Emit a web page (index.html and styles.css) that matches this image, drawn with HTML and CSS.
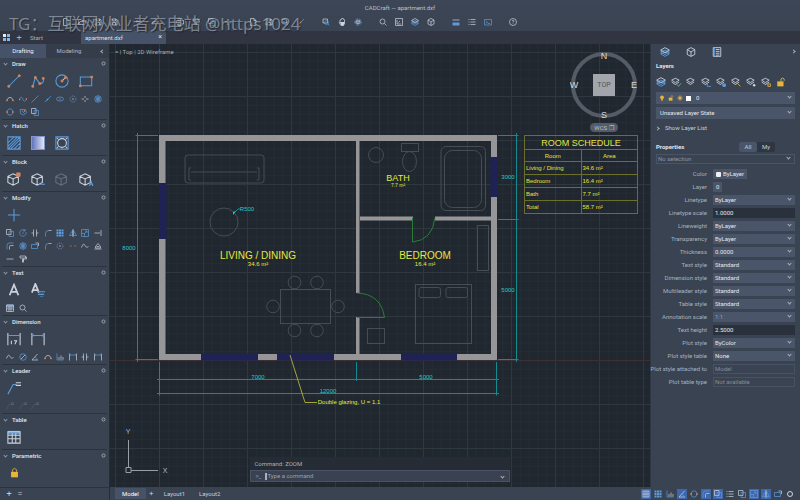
FILE: index.html
```html
<!DOCTYPE html>
<html lang="en">
<head>
<meta charset="utf-8">
<title>CADCraft — apartment.dxf</title>
<link rel="stylesheet" href="styles.css">
</head>
<body>
<svg class="defs" aria-hidden="true">
  <symbol id="line" viewBox="0 0 16 16"><path d="M2 14 14 2"/><path class="o" d="M1 13h2v2H1zM13 1h2v2h-2z"/></symbol>
  <symbol id="poly" viewBox="0 0 16 16"><path d="M2 14 5 4l5 7c3 0 5-2 4-6"/><path class="o" d="M1 13h2v2H1zM4 3h2v2H4zM9 10h2v2H9zM13 4h2v2h-2z"/></symbol>
  <symbol id="circle" viewBox="0 0 16 16"><circle cx="8" cy="8" r="7"/><path class="w" d="m8 8 4-4"/><path class="o" d="M7 7h2v2H7zM11 3h2v2h-2z"/></symbol>
  <symbol id="rect" viewBox="0 0 16 16"><path d="M1.500 3.500h13v10h-13z"/><path class="o" d="M.5 12.500h2v2h-2zM13.500 2.500h2v2h-2z"/></symbol>
  <symbol id="arc" viewBox="0 0 16 16"><path class="w" d="M2 11c1-8 11-8 12 0"/><path class="o" d="M1 10h2v2H1zM13 10h2v2h-2z"/></symbol>
  <symbol id="spline" viewBox="0 0 16 16"><path d="M1 9c3-7 5-5 7 0s4 5 7-1"/><path class="o" d="M0 8h2v2H0zM14 7h2v2h-2z"/></symbol>
  <symbol id="xline" viewBox="0 0 16 16"><path d="M1 15 15 1"/></symbol>
  <symbol id="ray" viewBox="0 0 16 16"><path d="M2 14 14 2"/><path class="o" d="M6 8h2v2H6z"/></symbol>
  <symbol id="ellipse" viewBox="0 0 16 16"><ellipse cx="8" cy="8" rx="7" ry="4"/><path class="w" d="M7 8h2"/></symbol>
  <symbol id="dots" viewBox="0 0 16 16"><circle cx="8" cy="8" r="6" stroke-dasharray="3 2"/><path class="o" d="M7 7h2v2H7z"/></symbol>
  <symbol id="point" viewBox="0 0 16 16"><path class="w" d="M8 2v4M8 10v4M1 8h5M10 8h5"/></symbol>
  <symbol id="donut" viewBox="0 0 16 16"><circle cx="8" cy="8" r="6.500"/><circle cx="8" cy="8" r="3"/><path d="m3 4 10 8M3 12 13 4M8 1v14"/></symbol>
  <symbol id="cloud" viewBox="0 0 16 16"><path d="M4 3q4-3 8 0 4 5 0 10-4 3-8 0-4-5 0-10z"/><path class="o" d="M1 7h2v2H1zM13 7h2v2h-2z"/></symbol>
  <symbol id="wipe" viewBox="0 0 16 16"><path d="M2 3h11l2 6-6 5-6-3zM5 5l6 6"/><path class="o" d="M10 5h2v2h-2z"/></symbol>
  <symbol id="copy" viewBox="0 0 16 16"><path class="w" d="M1 1h9v10H1z"/><path d="M6 5h9v10H6z"/></symbol>
  <symbol id="hatch" viewBox="0 0 16 16"><path d="M1 1h14v14H1zM1 8 8 1M1 12 12 1M1 15 15 1M4 15 15 4M8 15l7-7M12 15l3-3"/></symbol>
  <symbol id="bound" viewBox="0 0 16 16"><path d="M1 1h14v14H1z"/><circle class="w" cx="8" cy="8" r="5"/><path class="w" d="m2 2 2 2m8 8 2 2M2 14l2-2m8-8 2-2"/></symbol>
  <symbol id="cube" viewBox="0 0 16 16"><path class="w" d="m7 2 6 3v7l-6 3-6-3V5zM1 5l6 3 6-3M7 8v7"/></symbol>
  <symbol id="cross" viewBox="0 0 16 16"><path d="M8 1v14M1 8h14"/></symbol>
  <symbol id="rotate" viewBox="0 0 16 16"><path d="M12 3a6.500 6.500 0 1 0 2 3M12 0v4H8"/><path class="w" d="M7 8h2"/></symbol>
  <symbol id="trim" viewBox="0 0 16 16"><path class="w" d="M5 1v14M11 1v14M1 8h4M11 8h4"/></symbol>
  <symbol id="fillet" viewBox="0 0 16 16"><path d="M3 15V9q0-6 6-6"/><path class="w" d="M9 3h6"/></symbol>
  <symbol id="array" viewBox="0 0 16 16"><path class="f" d="M1 1h4v4H1zM6 1h4v4H6zM11 1h4v4h-4zM1 6h4v4H1zM6 6h4v4H6zM11 6h4v4h-4zM1 11h4v4H1zM6 11h4v4H6zM11 11h4v4h-4z"/></symbol>
  <symbol id="mirror" viewBox="0 0 16 16"><path d="M7 3v10H1zM9 3v10h6z"/><path class="w" d="M8 0v16"/></symbol>
  <symbol id="scale" viewBox="0 0 16 16"><path d="M1 1h14v14H1zM1 9h6v6M7 9l5-5M8 4h4v4"/></symbol>
  <symbol id="extend" viewBox="0 0 16 16"><path class="w" d="M1 8h11M14 2v12"/></symbol>
  <symbol id="offset" viewBox="0 0 16 16"><path d="M2 15V7q0-5 5-5h8"/><path class="w" d="M7 15V9q0-2 2-2h6"/></symbol>
  <symbol id="stretch" viewBox="0 0 16 16"><path d="M1 5h12v8H1z"/><path class="w" d="M9 2h6v6"/></symbol>
  <symbol id="dash" viewBox="0 0 16 16"><path class="o" d="M1 8h5M10 8h5"/></symbol>
  <symbol id="wave" viewBox="0 0 16 16"><path class="w" d="M1 11c3-8 5-8 7-4s4 4 7 2"/></symbol>
  <symbol id="erase" viewBox="0 0 16 16"><path class="w" d="m3 9 5-6 5 6v3H3zM1 14h14M5 9h6"/></symbol>
  <symbol id="minus" viewBox="0 0 16 16"><path class="w" d="M1 8h14"/></symbol>
  <symbol id="brush" viewBox="0 0 16 16"><path class="w" d="M2 2h11v4H2zM13 4h2v4H8v7M7 8h2v6H7z"/></symbol>
  <symbol id="lettera" viewBox="0 0 16 16"><path class="w big" d="m3 14 5-12 5 12M5 10h6"/></symbol>
  <symbol id="mtext" viewBox="0 0 16 16"><path class="w big" d="m1 11 4-10 4 10M2 8h6"/><path d="M7 10h9M8 13h7M10 16h4"/></symbol>
  <symbol id="table" viewBox="0 0 16 16"><path class="f" d="M1 1h14v4H1z"/><path class="w" d="M1 2h14v13H1zM1 6h14M1 10h14M6 4v11M10 4v11"/></symbol>
  <symbol id="find" viewBox="0 0 16 16"><circle class="w" cx="7" cy="7" r="5"/><path class="w" d="m11 11 4 4"/></symbol>
  <symbol id="dim" viewBox="0 0 16 16"><path class="w" d="M1 1v14M15 1v14"/><path d="M1 4h14M3 3 1 4l2 1M13 3l2 1-2 1"/></symbol>
  <symbol id="dimv" viewBox="0 0 16 16"><path class="w" d="M1 1v14M15 1v14M5 10v4M8 10h3l-2 4"/><path d="M1 4h14"/></symbol>
  <symbol id="angle" viewBox="0 0 16 16"><path class="w" d="M13 2 2 14h12"/><path d="M8 8q4 2 4 6"/></symbol>
  <symbol id="diam" viewBox="0 0 16 16"><circle cx="8" cy="8" r="6.500"/><path class="w" d="M4 12 12 4"/></symbol>
  <symbol id="ord" viewBox="0 0 16 16"><path d="M2 1v13h13"/><path class="w" d="M6 13V8M10 13V5M14 13V8"/></symbol>
  <symbol id="leader" viewBox="0 0 16 16"><path d="M1 15 7 4h4"/><path class="w" d="M10 2h6M10 5h6"/></symbol>
  <symbol id="lock" viewBox="0 0 16 16"><path class="ys" d="M5 7V4q3-4 6 0v3"/><path class="yf" d="M3 7h10v8H3z"/></symbol>
  <symbol id="unlock" viewBox="0 0 16 16"><path class="ys" d="M8 7V3q3-3 5 0v3"/><path class="yf" d="M2 7h10v8H2z"/></symbol>
  <symbol id="file" viewBox="0 0 16 16"><path class="w" d="M3 1h7l4 4v10H3zM10 1v4h4"/></symbol>
  <symbol id="folder" viewBox="0 0 16 16"><path class="w" d="M1 13V3h5l2 2h6v3M1 13l3-6h12l-3 6z"/></symbol>
  <symbol id="save" viewBox="0 0 16 16"><path class="w" d="M2 2h10l2 2v10H2zM5 2v4h6V2M5 14V9h6v5"/></symbol>
  <symbol id="undo" viewBox="0 0 16 16"><path class="w" d="M3 7h7q4 0 4 5M6 3 2 7l4 4"/></symbol>
  <symbol id="redo" viewBox="0 0 16 16"><path class="w" d="M13 7H6q-4 0-4 5M10 3l4 4-4 4"/></symbol>
  <symbol id="print" viewBox="0 0 16 16"><path class="w" d="M4 5V1h8v4M1 5h14v7H1zM4 10h8v5H4z"/></symbol>
  <symbol id="zoomw" viewBox="0 0 16 16"><path class="w" d="M2 2h9v8H2z"/><circle cx="9" cy="9" r="4"/><path d="m12 12 3 3"/></symbol>
  <symbol id="hand" viewBox="0 0 16 16"><path class="w" d="M4 8V4h2V2h2V1h2v1h2v2h1v7l-2 4H6L2 9z"/><path class="wf" d="M4 8h9v3l-2 4H6z"/></symbol>
  <symbol id="orbit" viewBox="0 0 16 16"><circle cx="8" cy="8" r="6.500" stroke-dasharray="6 2"/><path class="w" d="m8 4 4 2v4l-4 2-4-2V6zM4 6l4 2 4-2M8 8v4"/></symbol>
  <symbol id="frame" viewBox="0 0 16 16"><path class="w" d="M1 1h14v14H1zM4 4v8h8M7 9l3-3"/></symbol>
  <symbol id="layers" viewBox="0 0 16 16"><path d="m8 8 7 3-7 4-7-4z"/><path d="m8 5 7 3-7 4-7-4z"/><path class="w" d="m8 1 7 4-7 4-7-4z"/></symbol>
  <symbol id="layer" viewBox="0 0 16 16"><path class="w" d="m7 2 6 3-6 4-6-4zM1 8l6 4 6-4"/></symbol>
  <symbol id="box" viewBox="0 0 16 16"><path class="w" d="m8 1 6 3v8l-6 3-6-3V4zM2 4l6 4 6-4M8 8v7"/></symbol>
  <symbol id="panel" viewBox="0 0 16 16"><path class="w" d="M1 4h14"/><path class="f" d="M1 9h14v6H1z"/></symbol>
  <symbol id="list" viewBox="0 0 16 16"><path class="w" d="M1 3h2M5 3h10M1 8h2M5 8h10M1 13h2M5 13h10"/></symbol>
  <symbol id="prompt" viewBox="0 0 16 16"><path d="M1 3h14v11H1zM4 6l3 3-3 2M8 11h4"/></symbol>
  <symbol id="help" viewBox="0 0 16 16"><circle class="w" cx="8" cy="8" r="7"/><path class="w" d="M6 6q2-3 4 0 0 1-2 3M8 11v1"/></symbol>
  <symbol id="book" viewBox="0 0 16 16"><path class="w" d="M2 1h12v14H2zM6 4h6M6 7h6M6 10h6M6 13h6"/><path d="M4 1v14"/></symbol>
  <symbol id="grid" viewBox="0 0 16 16"><path class="w" d="M2 2h12v12H2zM6 2v12M10 2v12M2 8h12"/></symbol>
  <symbol id="gear" viewBox="0 0 16 16"><circle class="w big" cx="8" cy="8" r="5"/></symbol>
</svg>

<header class="titlebar">
  <h1>CADCraft — apartment.dxf</h1>
  <div class="toolbar" role="toolbar" aria-label="Main">
    <div class="group">
      <button aria-label="New"><svg><use href="#file"/></svg></button><button aria-label="Open"><svg><use href="#folder"/></svg></button><button aria-label="Save"><svg><use href="#save"/></svg></button><button aria-label="Save as"><svg><use href="#save"/></svg></button>
    </div>
    <div class="group">
      <button aria-label="Undo"><svg><use href="#undo"/></svg></button><button aria-label="Redo"><svg><use href="#redo"/></svg></button>
    </div>
    <div class="group">
      <button aria-label="Print"><svg><use href="#print"/></svg></button><button aria-label="Match"><svg><use href="#brush"/></svg></button><button aria-label="Copy"><svg><use href="#copy"/></svg></button><button aria-label="Measure"><svg><use href="#point"/></svg></button>
    </div>
    <div class="group">
      <button aria-label="Paste"><svg><use href="#file"/></svg></button><button aria-label="Block"><svg><use href="#save"/></svg></button><button aria-label="Reference"><svg><use href="#zoomw"/></svg></button><button aria-label="Attach"><svg><use href="#ray"/></svg></button>
    </div>
    <div class="group">
      <button aria-label="Zoom window"><svg><use href="#zoomw"/></svg></button><button aria-label="Pan"><svg><use href="#hand"/></svg></button><button aria-label="Orbit"><svg><use href="#orbit"/></svg></button>
    </div>
    <div class="group">
      <button aria-label="Zoom"><svg><use href="#find"/></svg></button><button aria-label="Extents"><svg><use href="#frame"/></svg></button><button aria-label="Layers"><svg><use href="#layers"/></svg></button><button aria-label="3D"><svg><use href="#box"/></svg></button>
    </div>
    <div class="group">
      <button aria-label="Panels"><svg><use href="#panel"/></svg></button><button aria-label="Properties"><svg><use href="#list"/></svg></button><button aria-label="Console"><svg><use href="#prompt"/></svg></button>
    </div>
    <div class="group"><button aria-label="Help"><svg><use href="#help"/></svg></button></div>
  </div>
  <div class="watermark" lang="zh">TG：互联网从业者充电站 @https1024</div>
</header>

<nav class="filetabs" aria-label="Files">
  <button class="home" aria-label="Home"><i></i><i></i><i></i><i></i></button>
  <button class="plus" aria-label="New tab">+</button>
  <a class="start" href="#start">Start</a>
  <a class="file" href="#apartment">apartment.dxf<span>×</span></a>
</nav>

<div class="workspace">
  <aside class="tools">
    <nav class="tooltabs"><button class="on">Drafting</button><button>Modeling</button><button class="fold" aria-label="Collapse"><b class="chev left"></b></button></nav>
    <div class="sections">
      <section><h2><b class="chev"></b>Draw<svg><use href="#gear"/></svg></h2>
        <div class="bigs"><svg><use href="#line"/></svg><svg><use href="#poly"/></svg><svg><use href="#circle"/></svg><svg><use href="#rect"/></svg></div>
        <div class="smalls"><svg><use href="#arc"/></svg><svg><use href="#spline"/></svg><svg><use href="#xline"/></svg><svg><use href="#ray"/></svg><svg><use href="#ellipse"/></svg><svg><use href="#dots"/></svg><svg><use href="#point"/></svg><svg><use href="#donut"/></svg><svg><use href="#cloud"/></svg><svg><use href="#wipe"/></svg><svg><use href="#copy"/></svg></div>
      </section>
      <section><h2><b class="chev"></b>Hatch<svg><use href="#gear"/></svg></h2>
        <div class="bigs"><svg><use href="#hatch"/></svg><span class="gradient"></span><svg><use href="#bound"/></svg></div>
      </section>
      <section><h2><b class="chev"></b>Block<svg><use href="#gear"/></svg></h2>
        <div class="bigs"><svg viewBox="0 0 16 16"><use href="#cube"/><path class="o" d="M11 1h4v4h-4z"/></svg><svg viewBox="0 0 16 16"><use href="#cube"/><path d="M9 14h7"/></svg><svg class="off"><use href="#cube"/></svg><svg viewBox="0 0 16 16"><use href="#cube"/><path d="m12 16 2-5 2 5M13 14h2"/></svg></div>
      </section>
      <section><h2><b class="chev"></b>Modify<svg><use href="#gear"/></svg></h2>
        <div class="bigs"><svg><use href="#cross"/></svg></div>
        <div class="smalls"><svg><use href="#copy"/></svg><svg><use href="#rotate"/></svg><svg><use href="#trim"/></svg><svg><use href="#fillet"/></svg><svg><use href="#array"/></svg><svg><use href="#mirror"/></svg><svg><use href="#scale"/></svg><svg><use href="#extend"/></svg><svg><use href="#offset"/></svg><svg><use href="#donut"/></svg><svg><use href="#stretch"/></svg><svg><use href="#fillet"/></svg><svg><use href="#dots"/></svg><svg><use href="#dash"/></svg><svg><use href="#wave"/></svg><svg><use href="#erase"/></svg><svg><use href="#minus"/></svg><svg><use href="#brush"/></svg></div>
      </section>
      <section><h2><b class="chev"></b>Text<svg><use href="#gear"/></svg></h2>
        <div class="bigs"><svg><use href="#lettera"/></svg><svg><use href="#mtext"/></svg></div>
        <div class="smalls"><svg><use href="#table"/></svg><svg><use href="#find"/></svg></div>
      </section>
      <section><h2><b class="chev"></b>Dimension<svg><use href="#gear"/></svg></h2>
        <div class="bigs"><svg><use href="#dimv"/></svg><svg><use href="#dim"/></svg></div>
        <div class="smalls"><svg><use href="#wave"/></svg><svg><use href="#diam"/></svg><svg><use href="#angle"/></svg><svg><use href="#arc"/></svg><svg><use href="#ord"/></svg><svg><use href="#dim"/></svg><svg><use href="#trim"/></svg><svg><use href="#dim"/></svg></div>
      </section>
      <section><h2><b class="chev"></b>Leader<svg><use href="#gear"/></svg></h2>
        <div class="bigs"><svg><use href="#leader"/></svg></div>
        <div class="smalls off"><svg><use href="#leader"/></svg><svg><use href="#leader"/></svg><svg><use href="#leader"/></svg></div>
      </section>
      <section><h2><b class="chev"></b>Table<svg><use href="#gear"/></svg></h2>
        <div class="bigs"><svg><use href="#table"/></svg></div>
      </section>
      <section><h2><b class="chev"></b>Parametric<svg><use href="#gear"/></svg></h2>
        <div class="bigs lockrow"><svg><use href="#lock"/></svg></div>
        <div class="smalls"><svg><use href="#minus"/></svg><svg><use href="#xline"/></svg><svg><use href="#angle"/></svg><svg><use href="#minus"/></svg><svg><use href="#cross"/></svg><svg><use href="#extend"/></svg><svg><use href="#arc"/></svg></div>
      </section>
    </div>
    <footer class="toolfoot"><button aria-label="Add">+</button><button aria-label="Menu">=</button></footer>
  </aside>

  <main class="center">
    <div class="canvas">
      <svg class="drawing" viewBox="110 44 540 443" preserveAspectRatio="xMidYMid slice">
        <defs>
          <pattern id="minor" x="159" y="360" width="8.800" height="8.800" patternUnits="userSpaceOnUse"><path d="M0 .5h8.800M.5 0v8.800" stroke="#242d35"/></pattern>
          <pattern id="major" x="159" y="360" width="44" height="44" patternUnits="userSpaceOnUse"><path d="M0 .5h44M.5 0v44" stroke="#2d383f"/></pattern>
        </defs>
        <rect class="paper" x="110" y="44" width="540" height="443" fill="url(#minor)"/>
        <rect class="paper" x="110" y="44" width="540" height="443" fill="url(#major)"/>
        <path d="M110 360.500h540" stroke="#3d3034"/><path d="M159.500 44v443" stroke="#2a4238"/>
        <g class="furniture">
          <rect x="185" y="155" width="79" height="28" rx="3"/><path d="M191 168h-2v12h2M257 168h2v12h-2M191 172h66"/>
          <circle cx="224" cy="222" r="14"/>
          <rect x="280.500" y="289.500" width="50" height="34"/>
          <circle cx="294.500" cy="282.500" r="6.300"/><circle cx="317" cy="282.500" r="6.300"/><circle cx="273" cy="306.500" r="6.300"/><circle cx="338" cy="306.500" r="6.300"/><circle cx="294.500" cy="330.500" r="6.300"/><circle cx="317" cy="330.500" r="6.300"/>
          <circle cx="376" cy="155" r="7.500"/><rect x="401.500" y="143.500" width="17" height="8"/><ellipse cx="409.500" cy="161.500" rx="7" ry="10"/>
          <rect x="441" y="146.500" width="44.500" height="64" rx="5"/><rect x="444.500" y="150.500" width="37" height="57" rx="8"/>
          <rect x="477.500" y="225.500" width="11" height="45"/>
          <rect x="415.500" y="284.500" width="56" height="59"/><rect x="419" y="287.500" width="21.500" height="10" rx="2"/><rect x="446" y="287.500" width="21.500" height="10" rx="2"/>
          <rect x="367.500" y="328.500" width="17" height="15"/>
        </g>
        <path class="wall" d="M159 135h338v225H159zM165.500 141v213h325.500V141z"/>
        <path class="wall" d="M356 141h3.500v152H356zM356 317h3.500v37H356zM359 216.500h54v4h-54zM435 216.500h56v4h-56z"/>
        <path class="window" d="M159 183h7.500v56H159zM490.500 157h7v40h-7zM201 353.500h57v7h-57zM277 353.500h57v7h-57zM401 353.500h56v7h-56z"/>
        <path class="door" d="M412.500 218v24q20-2 22.500-24M357 293q24 1 27.500 24.500H357"/>
        <g class="dimension">
          <path d="M137.500 133v229M135.500 135.500H158M135.500 359.500H158M516.500 133v229M498 135.500h20.500M498 219.500h20.500M498 359.500h20.500M157 379.500h342M157 393.500h342M159.500 362v33.500M356.500 362v19M496.500 362v33.500M233 214l5-5h2"/>
          <path class="fill" d="m233 215 3-4-3 1z"/>
          <text x="129" y="250">8000</text><text x="508" y="179">3000</text><text x="508" y="292">5000</text><text x="258" y="379">7000</text><text x="426" y="379">5000</text><text x="328" y="393">12000</text><text x="247" y="211">R500</text>
        </g>
        <path class="note" d="m290 355 15 47.500h12"/>
        <g class="labels">
          <text class="room" x="258" y="259">LIVING / DINING</text><text x="258" y="266">34.6 m²</text>
          <text class="room" x="425" y="259">BEDROOM</text><text x="425" y="266">16.4 m²</text>
          <text class="bath" x="398" y="181">BATH</text><text class="tiny" x="398" y="187">7.7 m²</text>
          <text x="349" y="404">Double glazing, U = 1.1</text>
        </g>
        <g class="ucs"><path d="M128.500 467V440M131 470.500h27M126 467.500h5v5h-5z"/><text x="128" y="434">Y</text><text x="165" y="473">X</text></g>
      </svg>
      <div class="viewlabel">= | Top | 2D Wireframe</div>
      <div class="compass">
        <svg viewBox="0 0 68 68"><circle cx="34" cy="34" r="31"/><text x="34" y="8">N</text><text x="34" y="67">S</text><text x="4" y="37">W</text><text x="64" y="37">E</text></svg>
        <button class="top">TOP</button>
        <button class="wcs">WCS ❐</button>
      </div>
      <table class="schedule">
        <thead><tr class="caption"><th colspan="2">ROOM SCHEDULE</th></tr><tr><th>Room</th><th>Area</th></tr></thead>
        <tbody><tr><td>Living / Dining</td><td>34.6 m²</td></tr><tr><td>Bedroom</td><td>16.4 m²</td></tr><tr><td>Bath</td><td>7.7 m²</td></tr><tr><td>Total</td><td>58.7 m²</td></tr></tbody>
      </table>
      <div class="command">
        <output>Command: ZOOM</output>
        <label><span>&gt;_</span><i class="caret"></i><input type="text" placeholder="Type a command" aria-label="Command"><b class="chev"></b></label>
      </div>
    </div>
  </main>

  <aside class="props">
    <nav class="proptabs"><button aria-label="Layers"><svg><use href="#layers"/></svg></button><button aria-label="Blocks"><svg><use href="#box"/></svg></button><button aria-label="Sheets"><svg><use href="#book"/></svg></button><b class="chev right"></b></nav>
    <h2>Layers</h2>
    <div class="layertools"><svg><use href="#layers"/></svg><svg viewBox="0 0 16 16"><use href="#layer"/><path class="g" d="m10 12 2 3 4-5"/></svg><svg><use href="#layer"/></svg><svg viewBox="0 0 16 16"><use href="#layer"/><path d="M10 11v4h6"/></svg><svg viewBox="0 0 16 16"><use href="#layer"/><circle class="f" cx="13" cy="13" r="3"/></svg><svg viewBox="0 0 16 16"><use href="#layer"/><path class="ys" d="m10 10 5 5"/></svg><svg viewBox="0 0 16 16"><use href="#layer"/><circle class="wf" cx="13" cy="13" r="2"/></svg><svg viewBox="0 0 16 16"><use href="#layer"/><path class="ys" d="M11 11h4v4h-4z"/></svg><svg><use href="#unlock"/></svg></div>
    <div class="select layer"><svg viewBox="0 0 16 16"><circle class="yf" cx="8" cy="6" r="5"/><path class="yf" d="M6 10h4v5H6z"/></svg><svg><use href="#unlock"/></svg><svg viewBox="0 0 16 16"><circle class="yf" cx="8" cy="8" r="4"/><path class="ys" d="M8 0v16M0 8h16M3 3l10 10M3 13 13 3"/></svg><i class="swatch"></i><select aria-label="Current layer"><option>0</option></select><b class="chev"></b></div>
    <div class="select state"><select aria-label="Layer state"><option>Unsaved Layer State</option></select><b class="chev"></b></div>
    <button class="show"><b class="chev right"></b>Show Layer List</button>
    <div class="prophead"><h2>Properties</h2><div class="toggle"><button class="on">All</button><button>My</button></div></div>
    <div class="select nosel"><select aria-label="Selection"><option>No selection</option></select><b class="chev"></b></div>
    <div class="form">
      <label for="color">Color</label><button class="chip" id="color"><i class="dot"></i>ByLayer</button>
      <label for="layer0">Layer</label><button class="chip" id="layer0">0</button>
      <label for="lt">Linetype</label><div class="select"><select id="lt"><option>ByLayer</option></select><b class="chev"></b></div>
      <label for="ls">Linetype scale</label><input id="ls" value="1.0000">
      <label for="lw">Lineweight</label><div class="select"><select id="lw"><option>ByLayer</option></select><b class="chev"></b></div>
      <label for="tr">Transparency</label><div class="select"><select id="tr"><option>ByLayer</option></select><b class="chev"></b></div>
      <label for="th">Thickness</label><div class="select"><select id="th"><option>0.0000</option></select><b class="chev"></b></div>
      <label for="ts">Text style</label><div class="select"><select id="ts"><option>Standard</option></select><b class="chev"></b></div>
      <label for="ds">Dimension style</label><div class="select"><select id="ds"><option>Standard</option></select><b class="chev"></b></div>
      <label for="ms">Multileader style</label><div class="select"><select id="ms"><option>Standard</option></select><b class="chev"></b></div>
      <label for="tb">Table style</label><div class="select"><select id="tb"><option>Standard</option></select><b class="chev"></b></div>
      <label for="an">Annotation scale</label><div class="select dim"><select id="an"><option>1:1</option></select><b class="chev"></b></div>
      <label for="hh">Text height</label><input id="hh" value="2.5000">
      <label for="ps">Plot style</label><div class="select"><select id="ps"><option>ByColor</option></select><b class="chev"></b></div>
      <label for="pt">Plot style table</label><div class="select"><select id="pt"><option>None</option></select><b class="chev"></b></div>
      <label for="pa">Plot style attached to</label><input id="pa" value="Model" disabled>
      <label for="py">Plot table type</label><input id="py" value="Not available" disabled>
    </div>
  </aside>

  <footer class="status">
    <nav><a class="on" href="#model">Model</a><button aria-label="New layout">+</button><a href="#layout1">Layout1</a><a href="#layout2">Layout2</a></nav>
    <div class="modes">
      <button class="on" aria-label="Grid"><svg><use href="#grid"/></svg></button><button aria-label="Snap"><svg><use href="#array"/></svg></button><button aria-label="Ortho"><svg><use href="#ord"/></svg></button><button class="on" aria-label="Polar"><svg><use href="#angle"/></svg></button><button aria-label="Isoplane"><svg><use href="#cloud"/></svg></button><button class="on" aria-label="Tracking"><svg><use href="#offset"/></svg></button><button class="on" aria-label="Object snap"><svg><use href="#copy"/></svg></button><button aria-label="Lineweight"><svg><use href="#list"/></svg></button><button aria-label="Cycling"><svg><use href="#copy"/></svg></button><button class="on" aria-label="UCS"><svg><use href="#scale"/></svg></button><button class="on" aria-label="Annotation"><svg><use href="#mirror"/></svg></button><button aria-label="Isolate"><svg><use href="#stretch"/></svg></button><button aria-label="Settings"><svg><use href="#gear"/></svg></button>
    </div>
  </footer>
</div>
</body>
</html>
```
FILE: styles.css
```css
* { box-sizing: border-box; margin: 0; padding: 0; }
body {
  display: flex; flex-direction: column; height: 100vh; overflow: hidden;
  background: #3b4453; color: #c9ced7;
  font: 6px/10px Roboto, "Liberation Sans", sans-serif;
}
button, input, select { font: inherit; color: inherit; background: none; border: 0; border-radius: 0; appearance: none; outline: 0; min-width: 0; }
a { color: inherit; text-decoration: none; }
svg { display: block; fill: none; stroke: #5b9bdc; stroke-width: 1.4; }
.defs { position: absolute; width: 0; height: 0; }
.w { stroke: #cdd3dc; }
.big { stroke-width: 2; }
.o { stroke: #d08560; fill: #d08560; stroke-width: 1; }
.g { stroke: #62b88a; }
.f { fill: #5b9bdc; stroke: none; }
.wf { fill: #cdd3dc; stroke: none; }
.ys { stroke: #e0b048; }
.yf { fill: #e8b53c; stroke: none; }
.off { opacity: .3; }

/* small angle used by drop-downs and headings */
.chev { display: block; flex: none; width: 3px; height: 3px; border: solid #aab2bf; border-width: 0 1px 1px 0; transform: rotate(45deg); }
.chev.left { transform: rotate(135deg); }
.chev.right { transform: rotate(-45deg); }

.titlebar { position: relative; flex: none; height: 31px; padding-top: 3px; background: linear-gradient(#3d4656, #3a4352); }
.titlebar h1 { font-size: 6px; font-weight: 400; text-align: center; color: #b9c0cb; }
.toolbar { display: flex; gap: 15px; padding: 4px 0 0 61px; }
.group { display: flex; gap: 6px; }
.toolbar button { width: 10px; height: 10px; padding: 1px; }
.toolbar svg { width: 8px; height: 8px; }
.watermark { position: absolute; left: 9px; top: 15px; font: 17px/17px "Noto Sans", "Noto Sans CJK SC", sans-serif; color: rgba(176, 183, 192, .62); text-shadow: 1px 1px 1px rgba(25, 30, 38, .7); white-space: nowrap; }

.filetabs { flex: none; display: flex; align-items: center; height: 13px; background: #303541; color: #a9b0bc; }
.home { display: grid; grid-template-columns: 3px 3px; gap: 1px; margin-left: 3px; }
.home i { width: 3px; height: 3px; background: #8cb4e4; }
.home i:first-child { background: #e4eaf2; }
.plus { width: 18px; font-size: 9px; }
.start { width: 53px; padding-left: 2px; }
.file { display: flex; justify-content: space-between; width: 85px; padding: 0 4px; line-height: 13px; background: #465267; color: #dde1e8; }
.file span { font-size: 7px; }

.workspace { flex: 1; min-height: 0; display: grid; grid-template: minmax(0, 1fr) 13px / 110px minmax(0, 1fr) 150px; }
.tools { grid-row: 1 / 3; display: flex; flex-direction: column; min-height: 0; background: #3a4352; border-right: 1px solid #272d37; }
.tooltabs { flex: none; display: flex; height: 14px; background: #353d4a; }
.tooltabs button { width: 46px; color: #aeb5c1; }
.tooltabs .on { background: #465267; color: #eef0f4; }
.tooltabs .fold { flex: 1; display: flex; align-items: center; justify-content: flex-end; padding-right: 5px; }
.sections { flex: 1; min-height: 0; overflow: hidden; }
.sections section { margin: 0 2px; padding-bottom: 1px; border-bottom: 1px solid #2c333e; }
.sections h2 { display: flex; align-items: center; gap: 5px; height: 11px; padding: 0 1px 0 2px; font-size: 6px; font-weight: 500; color: #e2e5ea; }
.sections h2 svg { width: 5px; height: 5px; margin-left: auto; }
.sections h2 .chev { border-color: #8f98a6; }
.sections .bigs { display: grid; grid-template-columns: repeat(4, 24px); height: 23px; place-items: center; }
.bigs svg, .gradient { width: 14px; height: 14px; overflow: visible; stroke-width: 1.2; }
.lockrow svg { width: 11px; height: 11px; }
.gradient { background: linear-gradient(90deg, #5f74bd, #e2e6f4); border: 1px solid #8295cf; }
.smalls { display: grid; grid-template-columns: repeat(8, 1fr); grid-auto-rows: 13px; margin: 0 3px 0 2px; place-items: center; }
.smalls svg { width: 8px; height: 8px; }
.toolfoot { flex: none; display: flex; gap: 5px; height: 13px; padding-left: 6px; border-top: 1px solid #2c333e; }
.toolfoot button { font-size: 9px; width: 6px; }

.center { display: flex; min-width: 0; min-height: 0; }
.canvas { position: relative; flex: 1; overflow: hidden; background: #20272f; }
.drawing { width: 100%; height: 100%; stroke-width: 1; font-family: "Liberation Sans", sans-serif; }
.drawing text { stroke: none; text-anchor: middle; font-size: 6px; }
.paper { stroke: none; }
.furniture { stroke: #454d55; }
.wall { fill: #969698; fill-rule: evenodd; stroke: none; }
.window { fill: #1f2255; stroke: none; }
.door { stroke: #2a7d38; }
.dimension { stroke: #168a91; }
.dimension text { fill: #2cc5cb; }
.dimension .fill { fill: #2cc5cb; stroke: none; }
.note { stroke: #a5a53a; }
.labels { fill: #e6e83c; }
.drawing .room { font-size: 10px; }
.drawing .bath { font-size: 9px; }
.drawing .tiny { font-size: 5px; }
.ucs { stroke: #9a9fa6; }
.ucs text { fill: #b5bac1; font-size: 7px; }
.viewlabel { position: absolute; left: 5px; top: 3px; color: #a4abb4; }

.compass { position: absolute; right: 12px; top: 7px; width: 68px; height: 82px; }
.compass svg { width: 68px; height: 68px; stroke: #555c67; stroke-width: 4; }
.compass text { fill: #d6d9de; stroke: none; font: 9px "Liberation Sans", sans-serif; text-anchor: middle; }
.compass .top { position: absolute; left: 23px; top: 23px; width: 22px; height: 22px; background: #a2a5ab; color: #4e545e; font-size: 7px; }
.compass .wcs { position: absolute; left: 20px; top: 72px; width: 28px; height: 9px; line-height: 9px; border-radius: 5px; background: #555c67; color: #b9bec7; }

.schedule { position: absolute; right: 12px; top: 91px; width: 114px; border-collapse: collapse; table-layout: fixed; font: 6px/10px "Liberation Sans", sans-serif; color: #e2e440; }
.schedule th, .schedule td { height: 13px; padding: 0 1px; border: 1px solid #6c6e2b; font-weight: 400; text-align: left; }
.schedule th { height: 12px; text-align: center; }
.schedule .caption th { height: 14px; font-size: 9px; }

.command { position: absolute; left: 26%; right: 26%; bottom: 5px; background: #252c35; }
.command output { display: block; height: 13px; padding-left: 4px; line-height: 13px; color: #aab0b9; }
.command label { display: flex; align-items: center; height: 12px; padding: 0 5px 0 4px; background: #3a4252; border: 1px solid #4a5364; }
.command span { width: 10px; color: #9ba3b0; }
.caret { width: 2px; height: 7px; background: #a8b0bd; }
.command input { flex: 1; height: 10px; }
.command input::placeholder { color: #98a0ad; }

.props { min-width: 0; padding: 0 5px; background: #3a4352; border-left: 1px solid #303744; white-space: nowrap; }
.props h2 { font-size: 6px; font-weight: 700; line-height: 10px; color: #e2e5ea; }
.proptabs { display: flex; align-items: center; gap: 16px; height: 15px; padding-left: 4px; }
.proptabs button, .proptabs svg { width: 10px; height: 10px; }
.proptabs .chev { margin-left: auto; }
.proptabs + h2 { margin-top: 2px; }
.layertools { display: flex; gap: 5px; height: 21px; align-items: center; }
.layertools svg { width: 10px; height: 10px; overflow: visible; }
.select { position: relative; display: flex; align-items: center; height: 10px; background: #4a556a; color: #e3e6eb; }
.select select { flex: 1; width: 100%; height: 10px; padding-left: 2px; }
.select .chev { position: absolute; right: 4px; top: 2px; }
.select.layer, .select.state { height: 12px; }
.layer { gap: 3px; padding-left: 3px; }
.layer svg { width: 6px; height: 6px; }
.swatch { width: 5px; height: 5px; background: #fff; }
.select.state { margin-top: 3px; }
.state select { padding-left: 4px; }
.select.layer .chev, .select.state .chev { top: 3px; }
.show { display: flex; align-items: center; gap: 6px; height: 18px; }
.prophead { display: flex; align-items: center; justify-content: space-between; margin-top: 3px; height: 13px; padding-right: 20px; }
.toggle { display: flex; background: #2f3642; border-radius: 2px; }
.toggle button { width: 18px; height: 10px; line-height: 10px; border-radius: 2px; }
.toggle .on { background: #4a556a; }
.select.nosel { margin-top: 1px; background: none; border: 1px solid #4a5467; color: #8c95a4; }
.nosel .chev { top: 1px; }
.nosel select { padding-left: 1px; }
.form { display: grid; grid-template-columns: 51px minmax(0, 1fr); gap: 3px 6px; grid-auto-rows: 10px; margin-top: 5px; line-height: 10px; }
.form label { display: flex; justify-content: flex-end; color: #aab1bd; }
.form input { height: 10px; padding: 0 2px; background: #2b313c; color: #e3e6eb; width: 100%; }
.form input:disabled { background: none; border: 1px solid #495265; color: #838c9b; padding: 0 1px; }
.form .dim { color: #949dab; }
.chip { justify-self: start; display: flex; align-items: center; gap: 2px; height: 10px; padding: 0 3px; background: #4a556a; color: #e3e6eb; }
.dot { width: 5px; height: 5px; border-radius: 1px; background: #eef0f3; }

.status { grid-column: 2 / 4; display: flex; justify-content: space-between; align-items: center; background: #3a4352; padding: 0 5px; }
.status nav { display: flex; align-items: center; }
.status a { line-height: 11px; padding: 0 7px; }
.status nav button { width: 11px; font-size: 8px; }
.status .on { background: #465267; color: #fff; }
.modes { display: flex; gap: 2px; }
.modes button { width: 10px; height: 10px; padding: 1px; }
.modes .on { background: #3f68ac; }
.modes svg { width: 8px; height: 8px; }
```
